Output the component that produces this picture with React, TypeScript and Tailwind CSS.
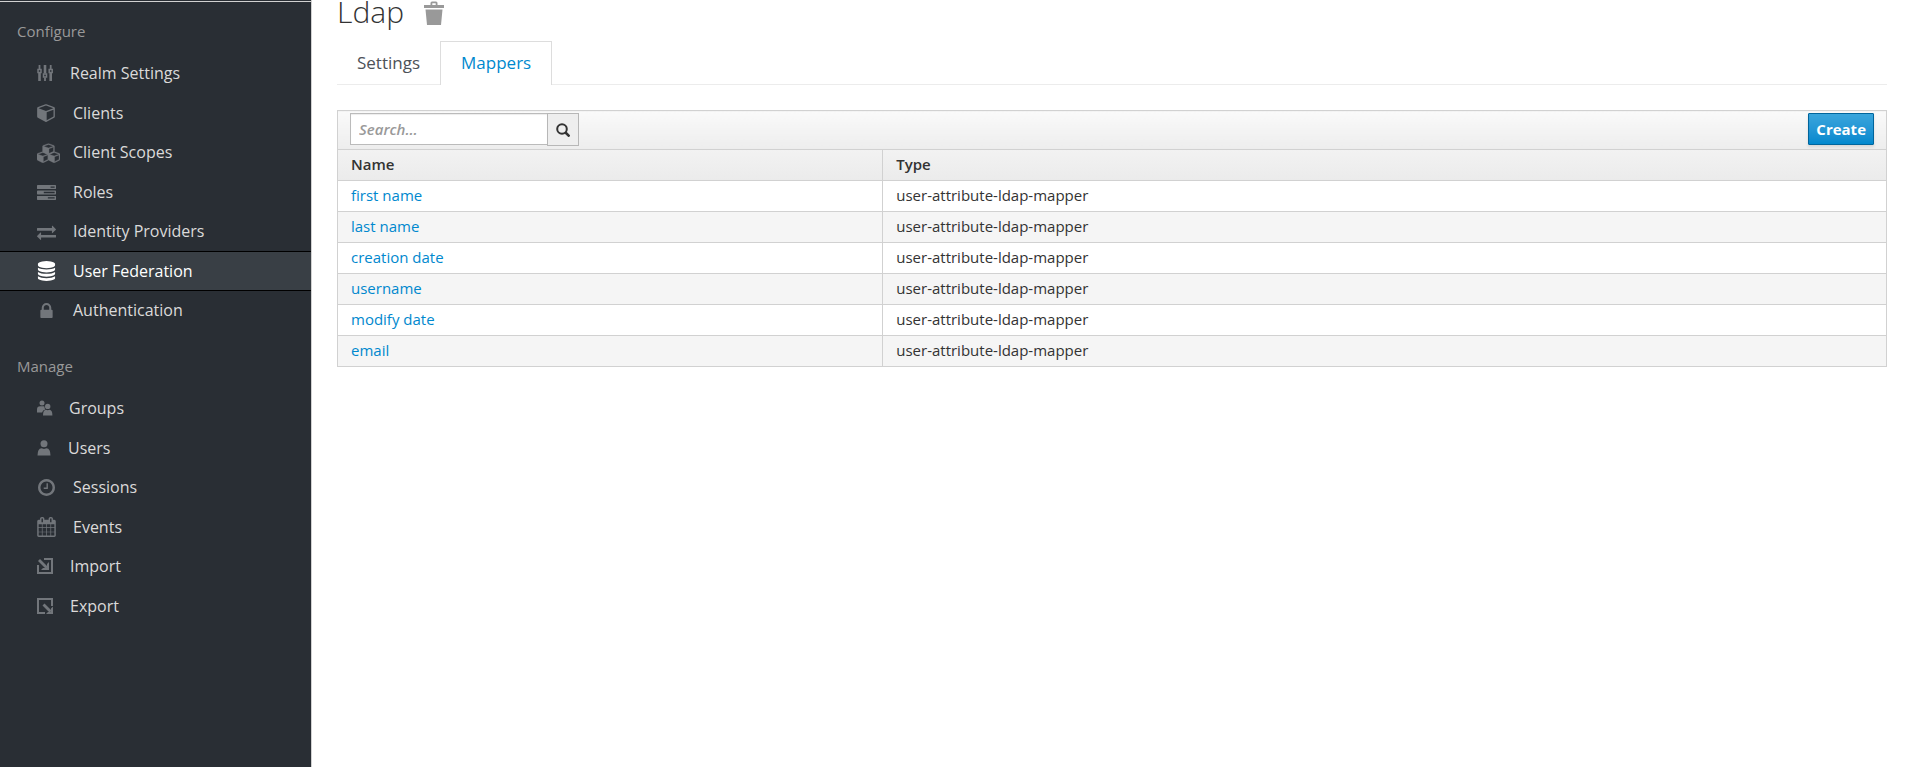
import React from 'react';

const CUBE =
  'M896 1629l640-349v-636l-640 233v752zm-64-865l698-254-698-254-698 254 698 254zm832-252v768q0 35-18 65t-49 47l-704 384q-28 16-61 16t-61-16l-704-384q-31-17-49-47t-18-65v-768q0-40 23-73t61-47l704-256q22-8 44-8t44 8l704 256q38 14 61 47t23 73z';

type MenuItem = {
  title: string;
  path: string;
  slot: string;
  active?: boolean;
  icon: React.ReactNode;
};

const configureItems: MenuItem[] = [
  {
    title: 'Realm Settings',
    path: '#/realm-settings',
    slot: 'w-[33px]',
    icon: (
      <svg className="w-4 h-4" viewBox="0 0 16 16" fill="none" stroke="currentColor">
        <path strokeWidth="2.6" d="M2.5 8v8M8 0v8.5M13.7 8v8" />
        <path strokeWidth="1.8" d="M2.5 0v4.5M8 12.5v3.5M13.7 0v4.5" />
        <path strokeWidth="1.5" d="M1 4.5h3v3h-3zM6.5 9h3v3h-3zM12.2 4.5h3v3h-3z" />
      </svg>
    ),
  },
  {
    title: 'Clients',
    path: '#/clients',
    slot: 'w-9',
    icon: (
      <svg className="w-[18px] h-[18px]" viewBox="0 110 1664 1690" fill="currentColor">
        <path d={CUBE} />
      </svg>
    ),
  },
  {
    title: 'Client Scopes',
    path: '#/client-scopes',
    slot: 'w-9',
    icon: (
      <svg className="w-[23px] h-[22px] shrink-0" viewBox="0 0 23 22" fill="currentColor" stroke="currentColor" strokeWidth="50">
        <g transform="translate(5.6 1.8) scale(0.0071 0.0067)"><path d={CUBE} /></g>
        <g transform="translate(0 9.8) scale(0.0071 0.0067)"><path d={CUBE} /></g>
        <g transform="translate(11.2 9.8) scale(0.0071 0.0067)"><path d={CUBE} /></g>
      </svg>
    ),
  },
  {
    title: 'Roles',
    path: '#/roles',
    slot: 'w-9',
    icon: (
      <svg className="w-[19px] h-[15px]" viewBox="0 128 1792 1408" fill="currentColor">
        <path d="M1024 1408h640v-128h-640v128zm-384-512h1024v-128h-1024v128zm640-512h384v-128h-384v128zm512 832v256q0 26-19 45t-45 19h-1664q-26 0-45-19t-19-45v-256q0-26 19-45t45-19h1664q26 0 45 19t19 45zm0-512v256q0 26-19 45t-45 19h-1664q-26 0-45-19t-19-45v-256q0-26 19-45t45-19h1664q26 0 45 19t19 45zm0-512v256q0 26-19 45t-45 19h-1664q-26 0-45-19t-19-45v-256q0-26 19-45t45-19h1664q26 0 45 19t19 45z" />
      </svg>
    ),
  },
  {
    title: 'Identity Providers',
    path: '#/identity-providers',
    slot: 'w-9',
    icon: (
      <svg className="w-[19px] h-[18px]" viewBox="0 -64 1792 1698" fill="currentColor">
        <path d="M1792 1184v192q0 13-9.5 22.5t-22.5 9.5h-1376v192q0 13-9.5 22.5t-22.5 9.5q-12 0-24-10l-319-320q-9-9-9-22 0-14 9-23l320-320q9-9 23-9 13 0 22.5 9.5t9.5 22.5v192h1376q13 0 22.5 9.5t9.5 22.5zm0-544q0 14-9 23l-320 320q-9 9-23 9-13 0-22.5-9.5t-9.5-22.5v-192h-1376q-13 0-22.5-9.5t-9.5-22.5v-192q0-13 9.5-22.5t22.5-9.5h1376v-192q0-14 9-23t23-9q12 0 24 10l319 319q9 9 9 23z" />
      </svg>
    ),
  },
  {
    title: 'User Federation',
    path: '#/user-federation',
    slot: 'w-9',
    active: true,
    icon: (
      <svg className="w-[19px] h-5" viewBox="0 0 1536 1792" fill="currentColor">
        <path d="M768 768q237 0 443-43t325-127v170q0 69-103 128t-280 93.5-385 34.5-385-34.5-280-93.5-103-128v-170q119 84 325 127t443 43zm0 768q237 0 443-43t325-127v170q0 69-103 128t-280 93.5-385 34.5-385-34.5-280-93.5-103-128v-170q119 84 325 127t443 43zm0-384q237 0 443-43t325-127v170q0 69-103 128t-280 93.5-385 34.5-385-34.5-280-93.5-103-128v-170q119 84 325 127t443 43zm0-1152q208 0 385 34.5t280 93.5 103 128v128q0 69-103 128t-280 93.5-385 34.5-385-34.5-280-93.5-103-128v-128q0-69 103-128t280-93.5 385-34.5z" />
      </svg>
    ),
  },
  {
    title: 'Authentication',
    path: '#/authentication',
    slot: 'w-9',
    icon: (
      <svg className="w-[19px] h-[15px]" viewBox="0 0 1152 1408" fill="currentColor">
        <path d="M320 640h512v-192q0-106-75-181t-181-75-181 75-75 181v192zm832 96v576q0 40-28 68t-68 28h-960q-40 0-68-28t-28-68v-576q0-40 28-68t68-28h32v-192q0-184 132-316t316-132 316 132 132 316v192h32q40 0 68 28t28 68z" />
      </svg>
    ),
  },
];

const manageItems: MenuItem[] = [
  {
    title: 'Groups',
    path: '#/groups',
    slot: 'w-8',
    icon: (
      <svg className="w-4 h-4" viewBox="0 0 16 16" fill="currentColor">
        <circle cx="5" cy="3" r="2.5" />
        <circle cx="10.7" cy="6.4" r="2.7" />
        <path d="M0 12.5V9.5q0-3.2 3.2-3.2h3.3q.6 0 .9.3q0 2.2 1 3-2.800.7-3.300 2.900zM6 15.500q0-5.500 3-5.700l1.700.5 1.700-.5q3 .2 3 5.700z" />
      </svg>
    ),
  },
  {
    title: 'Users',
    path: '#/users',
    slot: 'w-[31px]',
    icon: (
      <svg className="w-[14px] h-4" viewBox="0 0 14 16" fill="currentColor">
        <circle cx="7" cy="3.7" r="3.5" />
        <path d="M.5 15.5q0-7 4-7.3L7 9l2.5-.8q4 .3 4 7.3z" />
      </svg>
    ),
  },
  {
    title: 'Sessions',
    path: '#/sessions',
    slot: 'w-9',
    icon: (
      <svg className="w-[19px] h-[17px]" viewBox="0 128 1536 1536" fill="currentColor">
        <path d="M896 544v448q0 14-9 23t-23 9h-320q-14 0-23-9t-9-23v-64q0-14 9-23t23-9h224v-352q0-14 9-23t23-9h64q14 0 23 9t9 23zm416 352q0-148-73-273t-198-198-273-73-273 73-198 198-73 273 73 273 198 198 273 73 273-73 198-198 73-273zm224 0q0 209-103 385.5t-279.5 279.5-385.5 103-385.5-103-279.5-279.5-103-385.5 103-385.5 279.5-279.5 385.5-103 385.5 103 279.5 279.5 103 385.5z" />
      </svg>
    ),
  },
  {
    title: 'Events',
    path: '#/events',
    slot: 'w-9',
    icon: (
      <svg className="w-[19px] h-5" viewBox="0 0 1664 1792" fill="currentColor">
        <path d="M128 1664h288v-288h-288v288zm352 0h320v-288h-320v288zm-352-352h288v-320h-288v320zm352 0h320v-320h-320v320zm-352-384h288v-288h-288v288zm736 736h320v-288h-320v288zm-384-736h320v-288h-320v288zm768 736h288v-288h-288v288zm-384-352h320v-320h-320v320zm-352-864v-288q0-13-9.5-22.5t-22.5-9.5h-64q-13 0-22.5 9.5t-9.5 22.5v288q0 13 9.5 22.5t22.5 9.5h64q13 0 22.5-9.5t9.5-22.5zm736 864h288v-320h-288v320zm-384-384h320v-288h-320v288zm384 0h288v-288h-288v288zm32-480v-288q0-13-9.5-22.5t-22.5-9.5h-64q-13 0-22.5 9.5t-9.5 22.5v288q0 13 9.5 22.5t22.5 9.5h64q13 0 22.5-9.5t9.5-22.5zm384-64v1280q0 52-38 90t-90 38h-1408q-52 0-90-38t-38-90v-1280q0-52 38-90t90-38h128v-96q0-66 47-113t113-47h64q66 0 113 47t47 113v96h384v-96q0-66 47-113t113-47h64q66 0 113 47t47 113v96h128q52 0 90 38t38 90z" />
      </svg>
    ),
  },
  {
    title: 'Import',
    path: '#/import',
    slot: 'w-[33px]',
    icon: (
      <svg className="w-4 h-4" viewBox="0 0 16 16" fill="none" stroke="currentColor" strokeWidth="2">
        <path d="M1 7v8h14V1H7" />
        <path d="M2 2l7.5 7.5" strokeWidth="2.8" />
        <path d="M12 4v8H4l2-2h2.500L10 8.500V6z" fill="currentColor" stroke="none" />
      </svg>
    ),
  },
  {
    title: 'Export',
    path: '#/export',
    slot: 'w-[33px]',
    icon: (
      <svg className="w-4 h-4" viewBox="0 0 16 16" fill="none" stroke="currentColor" strokeWidth="2">
        <path d="M15 8V1H1v14h7" />
        <path d="M6.5 6.5l7 7" strokeWidth="2.8" />
        <path d="M16 8.500V16H9l2-2h2l1-1v-2.500z" fill="currentColor" stroke="none" />
      </svg>
    ),
  },
];

const mappers = ['first name', 'last name', 'creation date', 'username', 'modify date', 'email'];

const Menu: React.FC<{ items: MenuItem[] }> = ({ items }) => (
  <ul>
    {items.map((item) => (
      <li key={item.path} className="h-10 even:-mb-px">
        <a
          href={item.path}
          className={`flex items-center h-full pl-[37px] border-y text-base ${
            item.active ? 'bg-[#393f45] border-black text-white' : 'border-transparent text-[#dbdada]'
          }`}
        >
          <span className={`flex shrink-0 ${item.slot} ${item.active ? 'text-white' : 'text-[#72767b]'}`}>
            {item.icon}
          </span>
          {item.title}
        </a>
      </li>
    ))}
  </ul>
);

const App: React.FC = () => {
  return (
    <div className="flex min-h-screen bg-white font-['Open_Sans',sans-serif] text-[#333333]">
      <nav className="w-78 shrink-0 bg-[#292e34] border-r border-[#d1d1d1]">
        <div className="h-[2px] border-b border-[#d1d1d1]" />
        <h2 className="h-[51px] pt-[17px] pl-[17px] text-[15px] leading-6 text-[#999999]">Configure</h2>
        <Menu items={configureItems} />
        <h2 className="h-[58px] pt-6 pl-[17px] text-[15px] leading-6 text-[#999999]">Manage</h2>
        <Menu items={manageItems} />
      </nav>

      <main className="flex-1 min-w-0 pl-[25px] pr-6">
        <div className="flex items-start h-[41px]">
          <h1 className="text-[30px] leading-6 font-light">Ldap</h1>
          <button type="button" aria-label="Delete" className="ml-5 mt-px text-[#999999]">
            <svg className="w-5 h-6" viewBox="0 0 20 24" fill="currentColor">
              <path fillRule="evenodd" d="M0 4h6.500V2q0-1.500 1.500-1.500h4q1.500 0 1.500 1.500v2H20v3H0zM8.300 2.300V4h3.400V2.300zM1.500 8.500h17L17 24H3z" />
            </svg>
          </button>
        </div>

        <ul className="flex h-11 border-b border-[#ececec] text-[17px]">
          <li>
            <a href="#/settings" className="flex items-center h-11 px-5 pb-px text-[#4d5258]">Settings</a>
          </li>
          <li>
            <a href="#/mappers" className="flex items-center h-11 px-5 pb-px bg-white border border-b-0 border-[#dddddd] text-[#0088ce]">
              Mappers
            </a>
          </li>
        </ul>

        <table className="mt-[25px] w-full table-fixed border-collapse border border-[#d1d1d1] text-[15px] leading-5">
          <colgroup>
            <col className="w-[35.2%]" />
            <col />
          </colgroup>
          <thead>
            <tr>
              <th colSpan={2} className="h-[39px] p-0 bg-linear-to-b from-[#fafafa] to-[#ededed] border border-[#d1d1d1] font-normal">
                <div className="flex items-start justify-between h-[38px] pt-[2px] px-3">
                  <form className="flex">
                    <input
                      type="text"
                      aria-label="Search"
                      placeholder="Search..."
                      className="w-[198px] h-8 px-2 bg-white border border-[#bbbbbb] placeholder:text-[#999999] placeholder:italic placeholder:font-semibold shadow-[inset_0_1px_1px_rgba(0,0,0,0.075)]"
                    />
                    <button
                      type="button"
                      aria-label="Run search"
                      className="flex items-center justify-center w-8 h-[33px] -ml-px bg-[#eeeeee] border border-[#b7b7b7]"
                    >
                      <svg className="w-[14px] h-[14px]" viewBox="0 0 14 14" fill="none" stroke="currentColor">
                        <circle cx="6" cy="6" r="4.8" strokeWidth="2" />
                        <path strokeWidth="2.5" d="M9.500 9.500l4 4" />
                      </svg>
                    </button>
                  </form>
                  <button
                    type="button"
                    className="h-8 px-[7px] bg-linear-to-b from-[#39a5dc] to-[#0088ce] border border-[#00659c] rounded-[1px] font-bold text-white shadow-[0_2px_3px_rgba(0,0,0,0.1)]"
                  >
                    Create
                  </button>
                </div>
              </th>
            </tr>
            <tr className="bg-linear-to-b from-[#f2f2f2] to-[#ebebeb] text-left">
              <th className="h-[31px] pt-0 pb-[2px] px-[13px] border border-[#d1d1d1] font-semibold">Name</th>
              <th className="h-[31px] pt-0 pb-[2px] px-[13px] border border-[#d1d1d1] font-semibold">Type</th>
            </tr>
          </thead>
          <tbody>
            {mappers.map((name) => (
              <tr key={name} className="even:bg-[#f5f5f5]">
                <td className="h-[31px] pt-0 pb-[2px] px-[13px] border border-[#d1d1d1]">
                  <a href="#/mapper" className="text-[#0088ce]">{name}</a>
                </td>
                <td className="h-[31px] pt-0 pb-[2px] px-[13px] border border-[#d1d1d1]">user-attribute-ldap-mapper</td>
              </tr>
            ))}
          </tbody>
        </table>
      </main>
    </div>
  );
};

export default App;
